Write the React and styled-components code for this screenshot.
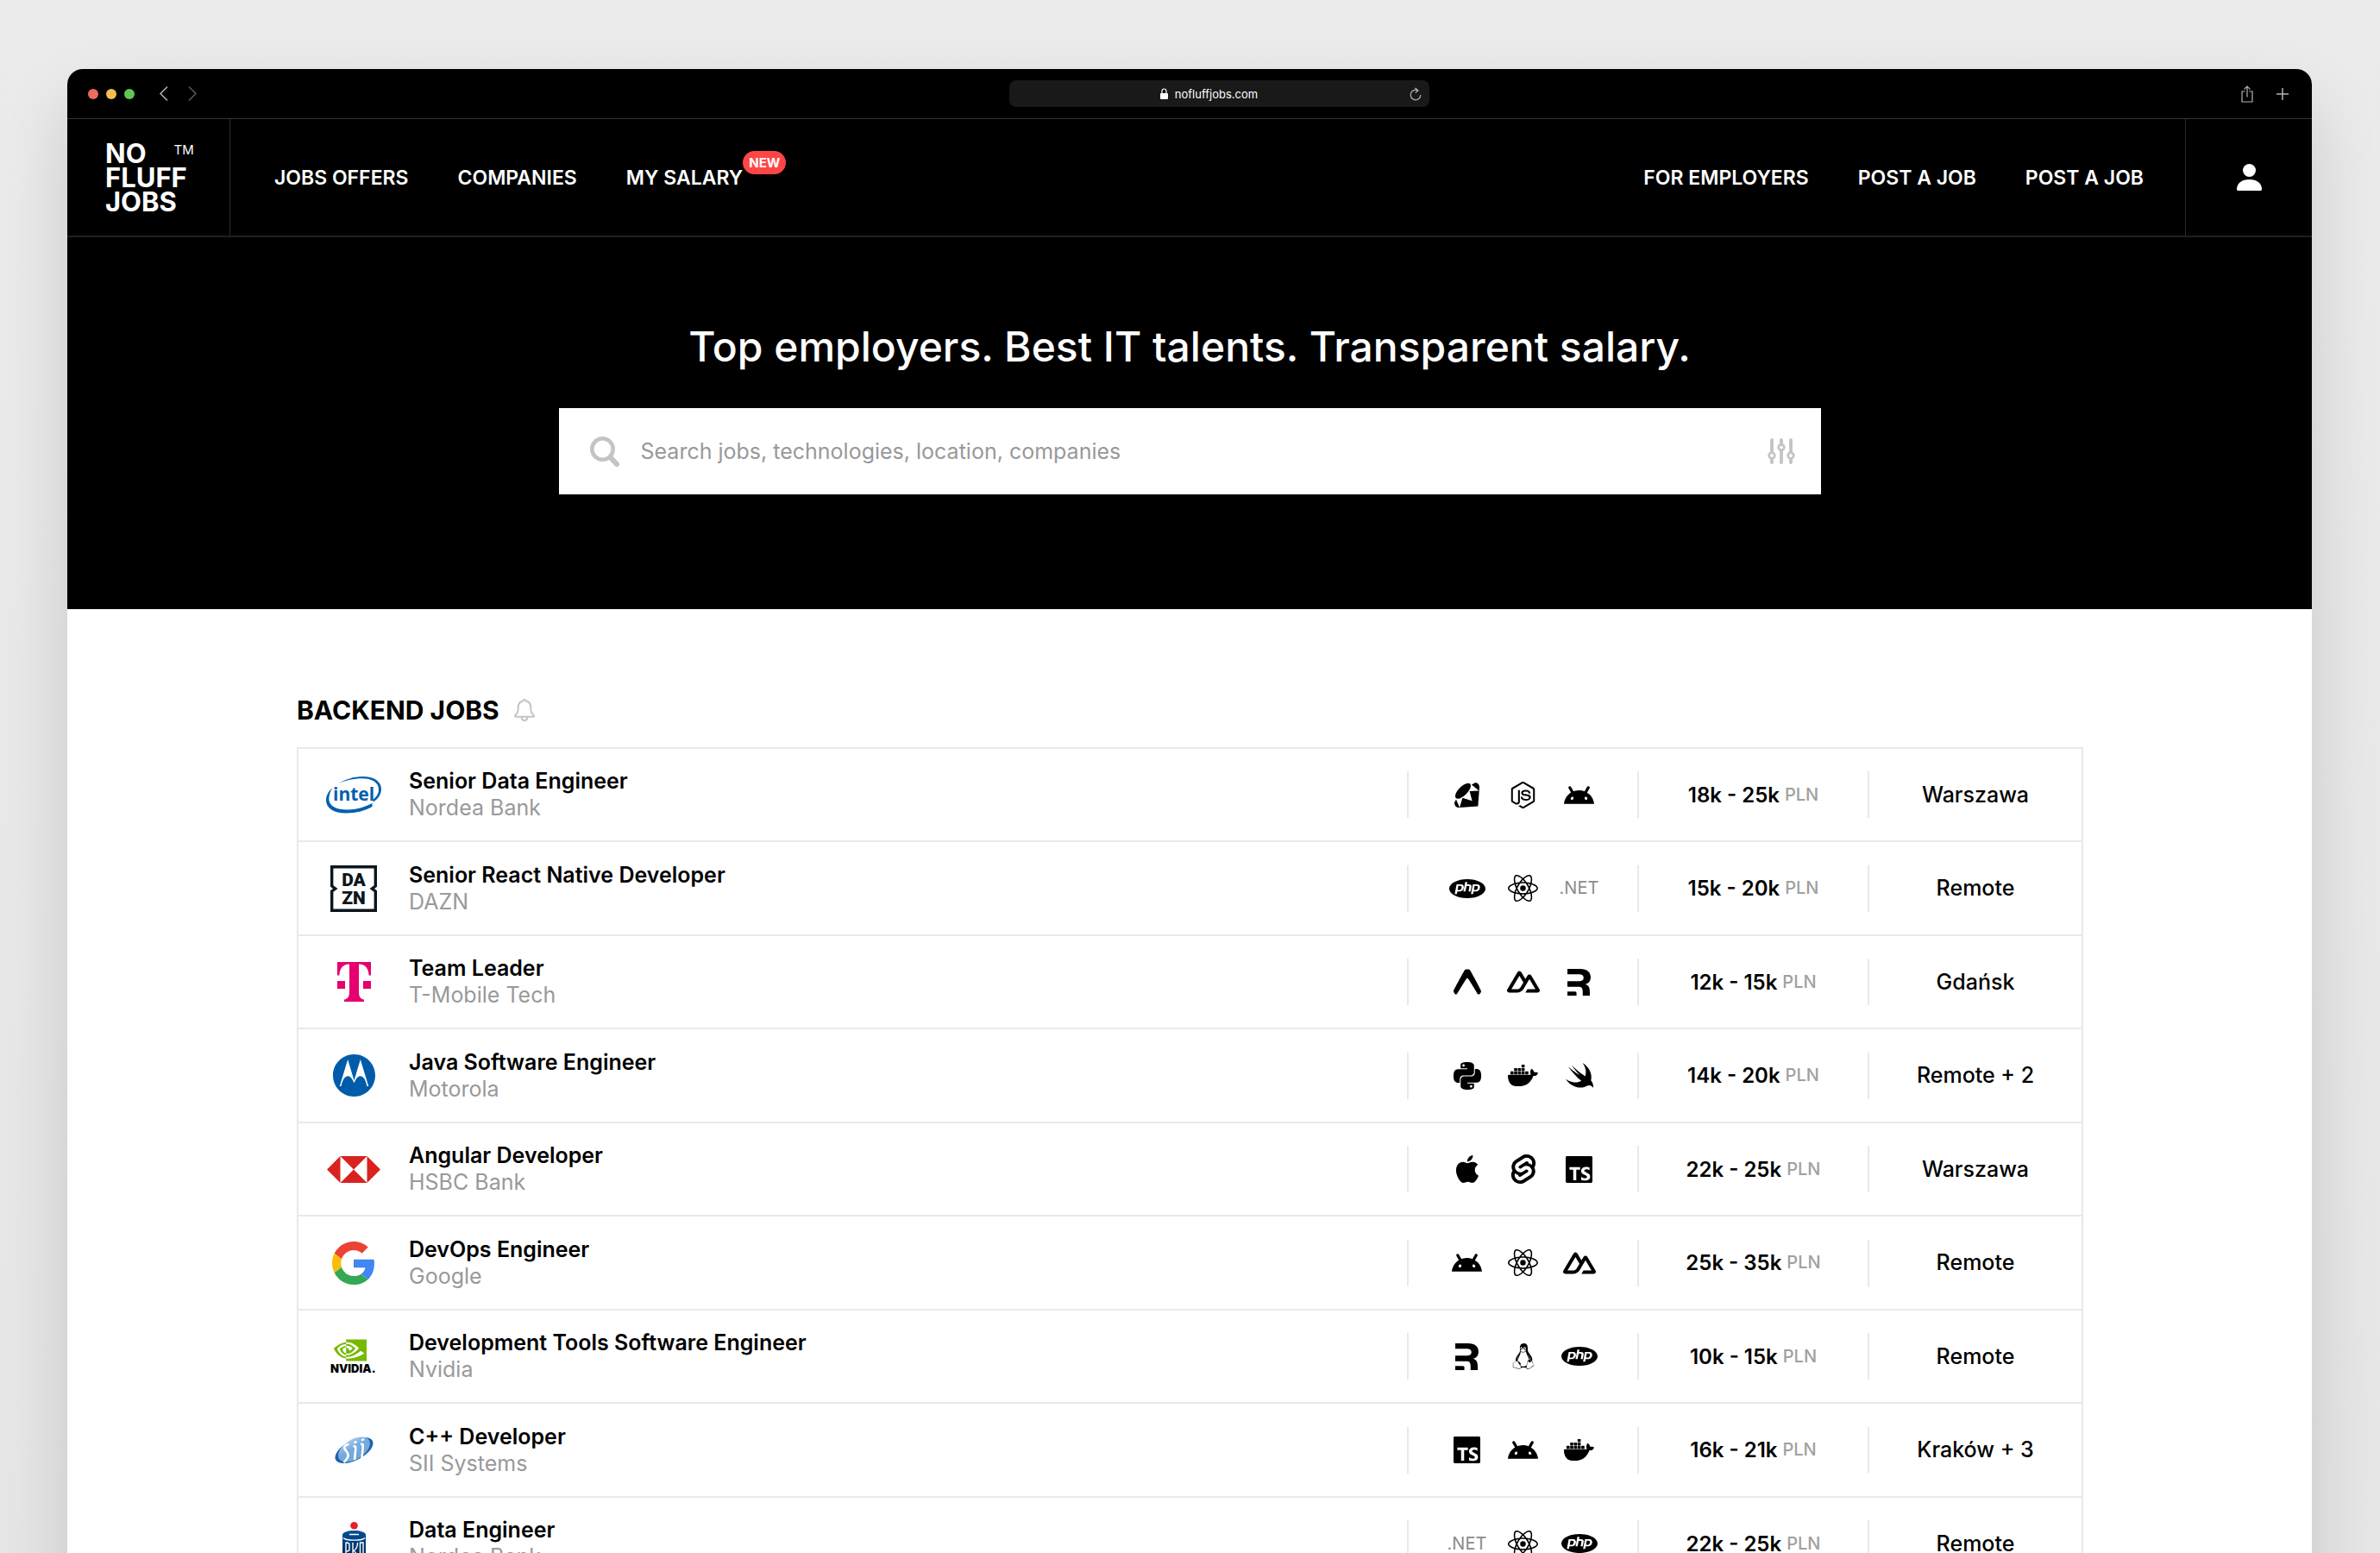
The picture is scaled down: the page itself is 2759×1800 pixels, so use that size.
import React from "react";
import styled, { createGlobalStyle } from "styled-components";
import {
  SiAndroid,
  SiApple,
  SiDocker,
  SiExpo,
  SiLinux,
  SiMotorola,
  SiNodedotjs,
  SiNvidia,
  SiPhp,
  SiPython,
  SiReact,
  SiRemix,
  SiRuby,
  SiSvelte,
  SiTypescript,
} from "react-icons/si";

const GlobalStyle = createGlobalStyle`
  * {
    box-sizing: border-box;
  }
  body {
    margin: 0;
    background: #eaeaea;
    font-family: "Inter", "Liberation Sans", sans-serif;
    color: #000;
  }
  a {
    color: inherit;
    text-decoration: none;
  }
  button {
    display: flex;
    padding: 0;
    border: 0;
    background: none;
    color: inherit;
    cursor: pointer;
  }
  button:disabled {
    opacity: 0.5;
  }
  svg {
    display: block;
    overflow: visible;
  }
`;

const Desktop = styled.div`
  height: 100vh;
  overflow: hidden;
  padding: 80px 79px 0 78px;
  background: linear-gradient(#ebebeb, #e6e6e6);
`;

const Window = styled.div`
  min-height: 100%;
  overflow: hidden;
  border-radius: 18px 18px 0 0;
  background: #fff;
  box-shadow: 0 40px 80px rgba(0, 0, 0, 0.14);
`;

const TitleBar = styled.div`
  display: flex;
  align-items: center;
  justify-content: space-between;
  height: 58px;
  padding: 0 27px 0 24px;
  border-bottom: 1px solid #333;
  background: #000;
  color: #b4b4b4;
`;

const Group = styled.div`
  display: flex;
  align-items: center;
  gap: ${(props) => props.$gap}px;
`;

const Light = styled.span`
  width: 12px;
  height: 12px;
  border-radius: 50%;
  background: ${(props) => props.$color};
`;

const AddressBar = styled.div`
  display: flex;
  align-items: center;
  width: 487px;
  height: 31px;
  padding-right: 9px;
  border-radius: 8px;
  background: #191919;
`;

const Address = styled.div`
  display: flex;
  flex: 1;
  align-items: center;
  justify-content: center;
  gap: 8px;
  color: #fff;
  font-size: 13px;
  line-height: 16px;
`;

const Header = styled.header`
  display: flex;
  height: 137px;
  border-bottom: 2px solid #1f1f1f;
  background: #000;
  color: #fff;
`;

const Logo = styled.a`
  display: flex;
  align-items: center;
  width: 189px;
  padding-left: 44px;
  border-right: 1px solid #2b2b2b;
  font-size: 31px;
  font-weight: 700;
  line-height: 28px;
`;

const LogoWords = styled.span`
  position: relative;
  display: flex;
  flex-direction: column;
  align-items: flex-start;
`;

const Trademark = styled.span`
  position: absolute;
  top: 0;
  right: -8px;
  font-size: 15px;
  font-weight: 400;
  line-height: 20px;
`;

const Nav = styled.nav`
  display: flex;
  align-items: center;
  gap: 57px;
  font-size: 23px;
  font-weight: 600;
  line-height: 32px;
`;

const MainNav = styled(Nav)`
  flex: 1;
  padding-left: 51px;
`;

const SideNav = styled(Nav)`
  padding-right: 48px;
`;

const NavLink = styled.a`
  position: relative;
  white-space: nowrap;
`;

const Badge = styled.span`
  position: absolute;
  left: 100%;
  bottom: 20px;
  padding: 0 7px;
  border-radius: 14px;
  background: #ff4646;
  font-size: 15px;
  font-weight: 700;
  line-height: 27px;
`;

const Account = styled.button`
  && {
    align-items: center;
    justify-content: center;
    width: 147px;
    border-left: 1px solid #2b2b2b;
  }
`;

const Hero = styled.section`
  display: flex;
  flex-direction: column;
  align-items: center;
  gap: 39px;
  padding: 95px 40px 133px;
  background: #000;
`;

const Slogan = styled.h1`
  margin: 0;
  color: #fff;
  font-size: 48px;
  font-weight: 500;
  line-height: 64px;
`;

const Search = styled.form`
  display: flex;
  align-items: center;
  gap: 25px;
  width: 100%;
  max-width: 1463px;
  height: 100px;
  padding: 0 30px 0 36px;
  background: #fff;
  color: #c4c4c4;
`;

const SearchInput = styled.input`
  flex: 1;
  min-width: 0;
  height: 100%;
  padding: 0;
  border: 0;
  outline: none;
  background: transparent;
  color: #000;
  font: 400 25px "Inter", sans-serif;
  &::placeholder {
    color: #999;
    opacity: 1;
  }
`;

const Content = styled.main`
  padding: 99px 265px 60px 266px;
`;

const SectionHead = styled.div`
  display: flex;
  align-items: center;
  gap: 17px;
  margin-bottom: 25px;
  color: #c4c4c4;
`;

const SectionTitle = styled.h2`
  margin: 0;
  color: #000;
  font-size: 30px;
  font-weight: 700;
  line-height: 36px;
`;

const Jobs = styled.table`
  width: 100%;
  table-layout: fixed;
  border: 2px solid #e9e9e9;
  border-bottom: 0;
  border-spacing: 0;
  font-size: 25px;
  font-weight: 500;
  line-height: 31px;
`;

const JobRow = styled.tr`
  height: 108px;
  &:nth-child(even) {
    height: 109px;
  }
`;

const Cell = styled.td`
  width: ${(props) => props.$width};
  padding: 0;
  border-bottom: 2px solid #e9e9e9;
`;

const Offer = styled.a`
  display: grid;
  grid-template-columns: 64px 1fr;
  align-items: center;
  gap: 32px;
  padding-left: 32px;
`;

const CompanyLogo = styled.span`
  display: flex;
  justify-content: center;
`;

const JobTitle = styled.div`
  font-weight: 600;
`;

const Company = styled.div`
  color: #999;
  font-weight: 400;
`;

const Divided = styled.div`
  display: flex;
  align-items: center;
  justify-content: center;
  height: 54px;
  border-left: 2px solid #e9e9e9;
  white-space: nowrap;
`;

const Tech = styled.span`
  display: flex;
  justify-content: center;
  width: 65px;
`;

const TechName = styled.span`
  color: #8c8c8c;
  font-size: 20px;
  font-weight: 400;
`;

const Salary = styled.span`
  font-size: 24px;
  font-weight: 600;
`;

const Currency = styled.span`
  margin-left: 6px;
  color: #a0a0a0;
  font-size: 20px;
`;

const Chevron = ({ dir }) => (
  <svg width="10" height="17" viewBox="0 0 10 17" fill="none" stroke="currentColor" strokeWidth="1.5">
    <path d={dir === "left" ? "M9 .5 1 8.5l8 8" : "M1 .5l8 8-8 8"} />
  </svg>
);

const LockIcon = () => (
  <svg width="9" height="13" viewBox="0 0 9 13">
    <rect y="6" width="9" height="7" rx="1" fill="currentColor" />
    <path d="M2 6.5V3.5a2.5 2.5 0 0 1 5 0v3" fill="none" stroke="currentColor" strokeWidth="1.2" />
  </svg>
);

const ReloadIcon = () => (
  <svg width="14" height="16" viewBox="0 0 14 16" fill="none" stroke="currentColor" strokeWidth="1.2">
    <path d="M10.5 4.4A5.8 5.8 0 1 0 12.8 9M6.5 1l3.2 2.7-2.9 3" />
  </svg>
);

const ShareIcon = () => (
  <svg width="14" height="20" viewBox="0 0 14 20" fill="none" stroke="currentColor" strokeWidth="1.2">
    <path d="M4.5 7H1v12h12V7H9.5M7 13.5V1.2M3.5 4.6 7 1.1l3.5 3.5" />
  </svg>
);

const PlusIcon = () => (
  <svg width="14" height="14" viewBox="0 0 14 14" stroke="currentColor" strokeWidth="1.5">
    <path d="M7 0v14M0 7h14" />
  </svg>
);

const UserIcon = () => (
  <svg width="29" height="31" viewBox="0 0 29 31" fill="currentColor">
    <circle cx="14.5" cy="7.5" r="7.5" />
    <path d="M1.8 31C.6 31 0 30.4 0 29.2 0 22.800 5.5 18 14.5 18S29 22.800 29 29.2c0 1.2-.6 1.8-1.800 1.800z" />
  </svg>
);

const SearchIcon = () => (
  <svg width="34" height="35" viewBox="0 0 34 35" fill="none" stroke="currentColor" strokeLinecap="round">
    <circle cx="14.5" cy="14.5" r="12.2" strokeWidth="4.6" />
    <path d="m24 24.5 7 7.5" strokeWidth="6" />
  </svg>
);

const FilterIcon = () => (
  <svg width="32" height="30" viewBox="0 0 32 30" fill="none" stroke="currentColor" strokeWidth="3.8" strokeLinecap="round">
    <path d="M5 2v14M5 24v4M16 2v5M16 14v14M27 2v14M27 24v4" />
    <circle cx="5" cy="20" r="3.3" strokeWidth="2.8" />
    <circle cx="16" cy="10.5" r="3.3" strokeWidth="2.8" />
    <circle cx="27" cy="20" r="3.3" strokeWidth="2.8" />
  </svg>
);

const BellIcon = () => (
  <svg width="24" height="26" viewBox="0 0 24 26" fill="none" stroke="currentColor" strokeWidth="2" strokeLinejoin="round">
    <path d="M12 1c-1 0-1.600.7-1.700 1.600C6.600 3.400 4.700 6.300 4.700 10c0 5.500-1 7.500-3.500 9.200-.5.500-.2 1.600.6 1.600h20.400c.8 0 1.100-1.100.6-1.600-2.500-1.700-3.500-3.700-3.500-9.200 0-3.700-1.900-6.600-5.600-7.400C13.600 1.700 13 1 12 1z" />
    <path d="M8.600 21c0 2.400 1.400 4 3.400 4s3.400-1.600 3.400-4" />
  </svg>
);

const NuxtIcon = () => (
  <svg width="38" height="38" viewBox="0 0 24 24" fill="currentColor">
    <path d="M13.4642 19.8295h8.9218c.2834 0 .5618-.0723.8072-.2098a1.5899 1.5899 0 0 0 .5908-.5732 1.5293 1.5293 0 0 0 .216-.783 1.529 1.529 0 0 0-.2167-.7828L17.7916 7.4142a1.59 1.59 0 0 0-.5907-.573 1.6524 1.6524 0 0 0-.807-.2099c-.2833 0-.5616.0724-.807.2098a1.59 1.59 0 0 0-.5906.5731L13.4642 9.99l-2.9954-5.0366a1.5913 1.5913 0 0 0-.591-.573 1.6533 1.6533 0 0 0-.8071-.2098c-.2834 0-.5617.0723-.8072.2097a1.5913 1.5913 0 0 0-.591.573L.2168 17.4808A1.5292 1.5292 0 0 0 0 18.2635c-.0001.2749.0744.545.216.783a1.59 1.59 0 0 0 .5908.5732c.2454.1375.5238.2098.8072.2098h5.6003c2.219 0 3.8554-.9454 4.9813-2.7899l2.7337-4.5922L16.3935 9.99l4.3944 7.382h-5.8586ZM7.123 17.3694l-3.9083-.0009 5.8586-9.8421 2.9232 4.921-1.9572 3.2892c-.7478 1.1967-1.5972 1.6328-2.9163 1.6328z" />
  </svg>
);

const SwiftIcon = () => (
  <svg width="32" height="29" viewBox="2.5 3.4 18 16.4" fill="currentColor">
    <path d="M13.543 3.41c4.114 2.47 6.545 7.162 5.549 11.131-.024.093-.05.181-.076.272l.002.001c2.062 2.538 1.5 5.258 1.236 4.745-1.072-2.086-3.066-1.568-4.088-1.043a6.803 6.803 0 0 1-.281.158l-.02.012-.002.002c-2.115 1.123-4.957 1.205-7.812-.022a12.568 12.568 0 0 1-5.64-4.838c.649.48 1.35.902 2.097 1.252 3.019 1.414 6.051 1.311 8.197-.002C9.651 12.73 7.101 9.67 5.146 7.191a10.628 10.628 0 0 1-1.005-1.384c2.34 2.142 6.038 4.83 7.365 5.576C8.69 8.408 6.208 4.743 6.324 4.86c4.436 4.466 8.527 6.996 8.527 6.996.154.085.27.154.36.213.085-.215.16-.437.224-.668.708-2.588-.09-5.548-1.893-7.992z" />
  </svg>
);

const IntelLogo = () => (
  <svg width="64" height="43" viewBox="0 0 64 43" fill="#0060ae">
    <path d="M14 8.500C22 3.500 32 0 42 0C56 0 64 6 64 14.500C64 21 60 26.500 54.500 29.500V26.500C59 23.500 61 19.500 61 15C61 7 53 2.300 42 2.300C32 2.300 22 4.500 14 8.500z" />
    <path d="M7.500 13C2.500 17.500 0 22 0 27.500C0 36.500 9 42.500 23 42.500C35 42.500 46 39.500 53.500 35V31C45 35.500 35 38.500 25 38.500C11.500 38.500 3.300 34 3.300 26C3.300 21.500 5 17 7.500 13z" />
    <text x="8" y="28" fontFamily="Open Sans" fontSize="21" fontWeight="700">
      intel
    </text>
  </svg>
);

const DaznLogo = () => (
  <svg width="54" height="54" viewBox="0 0 54 54" fill="#0c161c">
    <path d="M1.7 1.7h50.6v22.300l-4 3 4 3v22.300H1.700V30l4-3-4-3z" fill="none" stroke="#0c161c" strokeWidth="3.4" />
    <text x="27" y="24" fontFamily="Roboto" fontSize="21" fontWeight="900" textAnchor="middle">
      DA
    </text>
    <text x="27" y="45" fontFamily="Roboto" fontSize="21" fontWeight="900" textAnchor="middle">
      ZN
    </text>
  </svg>
);

const TelekomLogo = () => (
  <svg width="39" height="46" viewBox="0 0 39 46" fill="#e6006e">
    <path d="M0 0h39v15.500h-2.400C36.400 8 33 2.600 25 2.400V34c0 6 1.500 9 6 9.400V46H8v-2.600c4.500-.4 6-3.400 6-9.400V2.400C6 2.600 2.600 8 2.400 15.500H0z" />
    <path d="M0 22h9v9H0zM30 22h9v9h-9z" />
  </svg>
);

const HsbcLogo = () => (
  <svg width="62" height="31" viewBox="0 0 62 31" fill="#d9221f">
    <path d="M0 15.500 15.500 0v31zM62 15.500 46.500 0v31zM15.500 0h31L31 15.500zM15.500 31h31L31 15.500z" />
  </svg>
);

const GoogleLogo = () => (
  <svg width="50" height="50" viewBox="0 0 48 48">
    <path fill="#ea4335" d="M24 9.5c3.54 0 6.71 1.22 9.21 3.6l6.85-6.85C35.9 2.38 30.47 0 24 0 14.62 0 6.51 5.38 2.56 13.22l7.98 6.19C12.43 13.72 17.74 9.5 24 9.5z" />
    <path fill="#4285f4" d="M46.98 24.55c0-1.57-.15-3.09-.38-4.55H24v9.02h12.94c-.58 2.96-2.26 5.48-4.78 7.18l7.73 6c4.51-4.18 7.09-10.36 7.09-17.65z" />
    <path fill="#fbbc05" d="M10.53 28.59c-.48-1.45-.76-2.99-.76-4.59s.27-3.14.76-4.59l-7.98-6.19C.92 16.46 0 20.12 0 24c0 3.88.92 7.54 2.56 10.78l7.97-6.19z" />
    <path fill="#34a853" d="M24 48c6.48 0 11.93-2.13 15.89-5.81l-7.73-6c-2.15 1.45-4.92 2.3-8.16 2.3-6.26 0-11.57-4.22-13.47-9.91l-7.98 6.19C6.51 42.62 14.62 48 24 48z" />
  </svg>
);

const NvidiaLogo = () => (
  <svg width="54" height="40" viewBox="0 0 54 40">
    <g transform="translate(4 -6)">
      <SiNvidia size={38} color="#76b900" />
    </g>
    <text x="0" y="39" fontSize="13" fontWeight="900">
      NVIDIA.
    </text>
  </svg>
);

const SiiLogo = () => (
  <svg width="45" height="30" viewBox="0 0 45 30">
    <defs>
      <linearGradient id="sii" x1="0" y1="0" x2="0" y2="1">
        <stop offset="0" stopColor="#a3c6ea" />
        <stop offset="0.4" stopColor="#78abdd" />
        <stop offset="1" stopColor="#72a6da" />
      </linearGradient>
    </defs>
    <ellipse cx="22.5" cy="15" rx="24" ry="11.5" transform="rotate(-27 22.5 15)" fill="#1f61ae" />
    <ellipse cx="22.5" cy="14" rx="20.5" ry="11.5" transform="rotate(-32 22.5 14)" fill="url(#sii)" />
    <path d="M16.500 8c-4.500.5-6.500 3-4.500 6s4.500 4.500 3.500 8-3 5-5 7" fill="none" stroke="#fff" strokeWidth="2.6" />
    <path d="M21.500 10.500c2.500-.8 3 0 2.700 3.500L23 26M30 8c2.500-.8 3 0 2.700 3.500L31.500 24" fill="none" stroke="#fff" strokeWidth="2.6" />
    <path d="m22.500 6.500 3-1.800M31 3.500l3-1.500" stroke="#fff" strokeWidth="2.4" />
  </svg>
);

const PkoLogo = () => (
  <svg width="27" height="51" viewBox="0 0 27 51">
    <defs>
      <linearGradient id="pko" x1="0" y1="0" x2="0" y2="1">
        <stop offset="0" stopColor="#00509b" />
        <stop offset="1" stopColor="#001a3c" />
      </linearGradient>
    </defs>
    <circle cx="13.5" cy="4.300" r="4.300" fill="#ea1d2c" />
    <path d="M0 15c0-3 6-5 13.500-5S27 12 27 15v30c0 3-6 5.500-13.500 5.500S0 48 0 45z" fill="url(#pko)" />
    <path d="M8 14.500h11M1 18.500c3 3.500 22 3.500 25 0" fill="none" stroke="#fff" strokeWidth="1.300" />
    <path d="M4 23.500v23M4 24c3.500.2 4 .8 4 2v6c0 1.500-1.500 2-3.500 2M12 24v24M17.500 24c0 4.500-1.200 7.500-4.500 9.500 3.300 2 4.500 5 4.500 12M20.500 24h3.500v21h-3.500z" fill="none" stroke="#fff" strokeWidth="1.400" />
  </svg>
);

const techs = {
  ruby: <SiRuby size={29} />,
  node: <SiNodedotjs size={31} />,
  android: <SiAndroid size={35} />,
  php: <SiPhp size={42} />,
  react: <SiReact size={35} />,
  net: <TechName>.NET</TechName>,
  expo: <SiExpo size={32} />,
  nuxt: <NuxtIcon />,
  remix: <SiRemix size={31} />,
  python: <SiPython size={32} />,
  docker: <SiDocker size={35} />,
  swift: <SwiftIcon />,
  apple: <SiApple size={32} />,
  svelte: <SiSvelte size={34} />,
  typescript: <SiTypescript size={31} />,
  linux: <SiLinux size={30} />,
};

const jobs = [
  { title: "Senior Data Engineer", company: "Nordea Bank", logo: <IntelLogo />, stack: ["ruby", "node", "android"], salary: "18k - 25k", place: "Warszawa" },
  { title: "Senior React Native Developer", company: "DAZN", logo: <DaznLogo />, stack: ["php", "react", "net"], salary: "15k - 20k", place: "Remote" },
  { title: "Team Leader", company: "T-Mobile Tech", logo: <TelekomLogo />, stack: ["expo", "nuxt", "remix"], salary: "12k - 15k", place: "Gdańsk" },
  { title: "Java Software Engineer", company: "Motorola", logo: <SiMotorola size={49} color="#005cab" />, stack: ["python", "docker", "swift"], salary: "14k - 20k", place: "Remote + 2" },
  { title: "Angular Developer", company: "HSBC Bank", logo: <HsbcLogo />, stack: ["apple", "svelte", "typescript"], salary: "22k - 25k", place: "Warszawa" },
  { title: "DevOps Engineer", company: "Google", logo: <GoogleLogo />, stack: ["android", "react", "nuxt"], salary: "25k - 35k", place: "Remote" },
  { title: "Development Tools Software Engineer", company: "Nvidia", logo: <NvidiaLogo />, stack: ["remix", "linux", "php"], salary: "10k - 15k", place: "Remote" },
  { title: "C++ Developer", company: "SII Systems", logo: <SiiLogo />, stack: ["typescript", "android", "docker"], salary: "16k - 21k", place: "Kraków + 3" },
  { title: "Data Engineer", company: "Nordea Bank", logo: <PkoLogo />, stack: ["net", "react", "php"], salary: "22k - 25k", place: "Remote" },
];

const Job = ({ title, company, logo, stack, salary, place }) => (
  <JobRow>
    <Cell>
      <Offer href="#">
        <CompanyLogo>{logo}</CompanyLogo>
        <div>
          <JobTitle>{title}</JobTitle>
          <Company>{company}</Company>
        </div>
      </Offer>
    </Cell>
    <Cell $width="267px">
      <Divided>
        {stack.map((name) => (
          <Tech key={name}>{techs[name]}</Tech>
        ))}
      </Divided>
    </Cell>
    <Cell $width="267px">
      <Divided>
        <Salary>{salary}</Salary>
        <Currency>PLN</Currency>
      </Divided>
    </Cell>
    <Cell $width="248px">
      <Divided>{place}</Divided>
    </Cell>
  </JobRow>
);

export default () => (
  <>
    <GlobalStyle />
    <Desktop>
      <Window>
        <TitleBar>
          <Group $gap={29}>
            <Group $gap={9}>
              <Light $color="#ed6a5e" />
              <Light $color="#f5bf4f" />
              <Light $color="#61c554" />
            </Group>
            <Group $gap={23}>
              <button aria-label="Back">
                <Chevron dir="left" />
              </button>
              <button aria-label="Forward" disabled>
                <Chevron dir="right" />
              </button>
            </Group>
          </Group>
          <AddressBar>
            <Address>
              <LockIcon />
              nofluffjobs.com
            </Address>
            <button aria-label="Reload">
              <ReloadIcon />
            </button>
          </AddressBar>
          <Group $gap={27}>
            <button aria-label="Share">
              <ShareIcon />
            </button>
            <button aria-label="New tab">
              <PlusIcon />
            </button>
          </Group>
        </TitleBar>
        <Header>
          <Logo href="#">
            <LogoWords>
              <span>NO</span>
              <span>FLUFF</span>
              <span>JOBS</span>
              <Trademark>TM</Trademark>
            </LogoWords>
          </Logo>
          <MainNav>
            <NavLink href="#">JOBS OFFERS</NavLink>
            <NavLink href="#">COMPANIES</NavLink>
            <NavLink href="#">
              MY SALARY
              <Badge>NEW</Badge>
            </NavLink>
          </MainNav>
          <SideNav>
            <NavLink href="#">FOR EMPLOYERS</NavLink>
            <NavLink href="#">POST A JOB</NavLink>
            <NavLink href="#">POST A JOB</NavLink>
          </SideNav>
          <Account aria-label="Account">
            <UserIcon />
          </Account>
        </Header>
        <Hero>
          <Slogan>Top employers. Best IT talents. Transparent salary.</Slogan>
          <Search>
            <SearchIcon />
            <SearchInput type="text" aria-label="Search" placeholder="Search jobs, technologies, location, companies" />
            <button type="button" aria-label="Filters">
              <FilterIcon />
            </button>
          </Search>
        </Hero>
        <Content>
          <SectionHead>
            <SectionTitle>BACKEND JOBS</SectionTitle>
            <button aria-label="Notify me">
              <BellIcon />
            </button>
          </SectionHead>
          <Jobs>
            <tbody>
              {jobs.map((job) => (
                <Job key={job.title} {...job} />
              ))}
            </tbody>
          </Jobs>
        </Content>
      </Window>
    </Desktop>
  </>
);
